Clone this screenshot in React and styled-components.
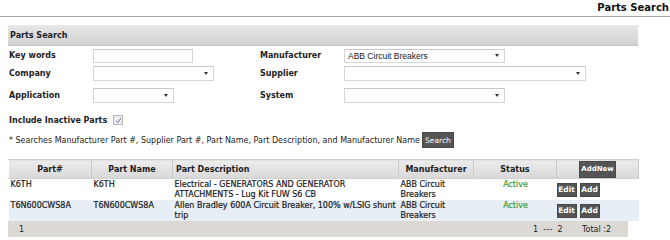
import React from 'react';
import styled, { createGlobalStyle } from 'styled-components';

const GlobalStyle = createGlobalStyle`
  html, body {
    margin: 0;
    padding: 0;
    background: #fff;
    font-family: "DejaVu Sans", Verdana, sans-serif;
    color: #222;
  }
`;

const Page = styled.div`
  width: 670px;
  height: 240px;
  overflow: hidden;
`;

const TitleBar = styled.div`
  height: 16px;
  border-bottom: 1px solid #aaa;
  text-align: right;
  padding-right: 1px;
  font-size: 10px;
  font-weight: bold;
  line-height: 16px;
  color: #111;
`;

const Content = styled.div`
  padding: 8px 32px 0 8px;
`;

const PanelHeader = styled.div`
  height: 19px;
  line-height: 19px;
  padding-left: 2px;
  font-size: 8px;
  font-weight: bold;
  color: #222;
  background: linear-gradient(#e6e6e6, #d2d2d2);
  border-top: 1px solid #e9e9e9;
  border-bottom: 1px solid #c4c4c4;
`;

const FormGrid = styled.div`
  display: grid;
  grid-template-columns: 84px 167px 84px 1fr;
  grid-template-rows: 17px 19px 24px;
  align-items: center;
  padding: 1px 0 0 1px;
`;

const Label = styled.div`
  font-size: 8px;
  font-weight: bold;
  color: #222;
`;

const Field = styled.div`
  box-sizing: border-box;
  width: ${p => p.$w}px;
  height: ${p => (p.$tall ? 15 : 14)}px;
  border: 1px solid #d6d6d6;
  border-top-color: #c8c8c8;
  background: #fff;
  display: flex;
  align-items: center;
  justify-content: space-between;
  padding: 0 5px 0 3px;
  font-family: "Liberation Sans", Arial, sans-serif;
  font-size: 8.5px;
  color: #222;
`;

const Arrow = styled.span`
  width: 0;
  height: 0;
  border-left: 2.5px solid transparent;
  border-right: 2.5px solid transparent;
  border-top: 3px solid #333;
`;

const Select = ({ w, value, tall }) => (
  <Field $w={w} $tall={tall}>
    <span>{value}</span>
    <Arrow />
  </Field>
);

const InactiveRow = styled.div`
  display: flex;
  align-items: center;
  height: 10px;
  gap: 6px;
  margin: 8px 0 0 1px;
`;

const Check = styled.span`
  width: 8px;
  height: 8px;
  border: 1px solid #b8b8b8;
  background: #eee;
  display: inline-flex;
  align-items: center;
  justify-content: center;
`;

const NoteRow = styled.div`
  display: flex;
  align-items: center;
  gap: 2px;
  margin: 7px 0 0 1px;
  font-size: 8px;
  color: #222;
`;

const DarkButton = styled.span`
  display: inline-flex;
  align-items: center;
  justify-content: center;
  box-sizing: border-box;
  height: ${p => p.$h || 14}px;
  ${p => (p.$w ? `width: ${p.$w}px;` : '')}
  padding: 0;
  background: #555;
  color: #fff;
  font-size: ${p => p.$fs || 8}px;
  font-weight: ${p => (p.$bold ? 'bold' : 'normal')};
  border: 1px solid #484848;
  white-space: nowrap;
`;

const Table = styled.table`
  margin-top: 11px;
  width: 630px;
  border-collapse: collapse;
  table-layout: fixed;
  font-size: 8px;
`;

const Th = styled.th`
  height: 18px;
  padding: 0 3px;
  background: linear-gradient(#ececec, #d8d8d8);
  border-left: 1px solid #fff;
  border-right: 1px solid #c9c9c9;
  border-top: 1px solid #d0d0d0;
  border-bottom: 1px solid #d0d0d0;
  font-weight: bold;
  color: #222;
  font-size: 8px;
  text-align: ${p => p.$align || 'center'};
`;

const Tr = styled.tr`
  background: ${p => (p.$alt ? '#e8eef6' : '#fff')};
`;

const Td = styled.td`
  padding: 1px 1px 0 ${p => (p.$flush ? 0 : 2)}px;
  vertical-align: top;
  line-height: 10px;
  text-align: ${p => p.$align || 'left'};
  color: ${p => p.$color || '#1a1a1a'};
  -webkit-text-stroke: 0.2px ${p => p.$color || '#1a1a1a'};
`;

const Actions = styled.div`
  display: flex;
  gap: 3px;
  padding-top: 3px;
  -webkit-text-stroke: 0;
`;

const Footer = styled.div`
  width: 620px;
  height: 16px;
  background: #dcd9d5;
  display: flex;
  align-items: center;
  font-size: 8px;
  color: #222;
  padding-left: 11px;
  box-sizing: border-box;
`;

const Pager = styled.span`
  margin-left: auto;
  margin-right: 19px;
  word-spacing: 2px;
  letter-spacing: 0.3px;
`;

const Total = styled.span`
  margin-right: 17px;
`;

const rows = [
  {
    part: 'K6TH',
    name: 'K6TH',
    desc: 'Electrical - GENERATORS AND GENERATOR ATTACHMENTS - Lug Kit FUW S6 CB',
    mfr: 'ABB Circuit Breakers',
  },
  {
    part: 'T6N600CWS8A',
    name: 'T6N600CWS8A',
    desc: 'Allen Bradley 600A Circuit Breaker, 100% w/LSIG shunt trip',
    mfr: 'ABB Circuit Breakers',
  },
];

export default function App() {
  return (
    <Page>
      <GlobalStyle />
      <TitleBar>Parts Search</TitleBar>
      <Content>
        <PanelHeader>Parts Search</PanelHeader>
        <FormGrid>
          <Label>Key words</Label>
          <Field $w={100} />
          <Label>Manufacturer</Label>
          <Select w={161} value="ABB Circuit Breakers" />
          <Label>Company</Label>
          <Select w={121} tall />
          <Label>Supplier</Label>
          <Select w={242} tall />
          <Label>Application</Label>
          <Select w={81} tall />
          <Label>System</Label>
          <Select w={161} tall />
        </FormGrid>
        <InactiveRow>
          <Label>Include Inactive Parts</Label>
          <Check>
            <svg width="7" height="7" viewBox="0 0 7 7">
              <path d="M1 3.8 L2.8 5.5 L6 1" fill="none" stroke="#5577aa" strokeWidth="1" />
            </svg>
          </Check>
        </InactiveRow>
        <NoteRow>
          <span>
            * Searches Manufacturer Part #, Supplier Part #, Part Name, Part Description, and Manufacturer Name
          </span>
          <DarkButton $h={16} $w={32} $fs={7.5}>Search</DarkButton>
        </NoteRow>
        <Table>
          <colgroup>
            <col style={{ width: 83 }} />
            <col style={{ width: 81 }} />
            <col style={{ width: 226 }} />
            <col style={{ width: 75 }} />
            <col style={{ width: 83 }} />
            <col style={{ width: 82 }} />
          </colgroup>
          <thead>
            <tr>
              <Th>Part#</Th>
              <Th>Part Name</Th>
              <Th $align="left">Part Description</Th>
              <Th>Manufacturer</Th>
              <Th>Status</Th>
              <Th>
                <DarkButton $bold $h={17} $w={37} $fs={7}>AddNew</DarkButton>
              </Th>
            </tr>
          </thead>
          <tbody>
            {rows.map((r, i) => (
              <Tr key={r.part} $alt={i % 2 === 1}>
                <Td>{r.part}</Td>
                <Td>{r.name}</Td>
                <Td>{r.desc}</Td>
                <Td>{r.mfr}</Td>
                <Td $align="center" $color="#3f9e2f">Active</Td>
                <Td $flush>
                  <Actions>
                    <DarkButton $bold $w={20} $fs={7.5}>Edit</DarkButton>
                    <DarkButton $bold $w={20} $fs={7.5}>Add</DarkButton>
                  </Actions>
                </Td>
              </Tr>
            ))}
          </tbody>
        </Table>
        <Footer>
          <span>1</span>
          <Pager>1 --- 2</Pager>
          <Total>Total :2</Total>
        </Footer>
      </Content>
    </Page>
  );
}
